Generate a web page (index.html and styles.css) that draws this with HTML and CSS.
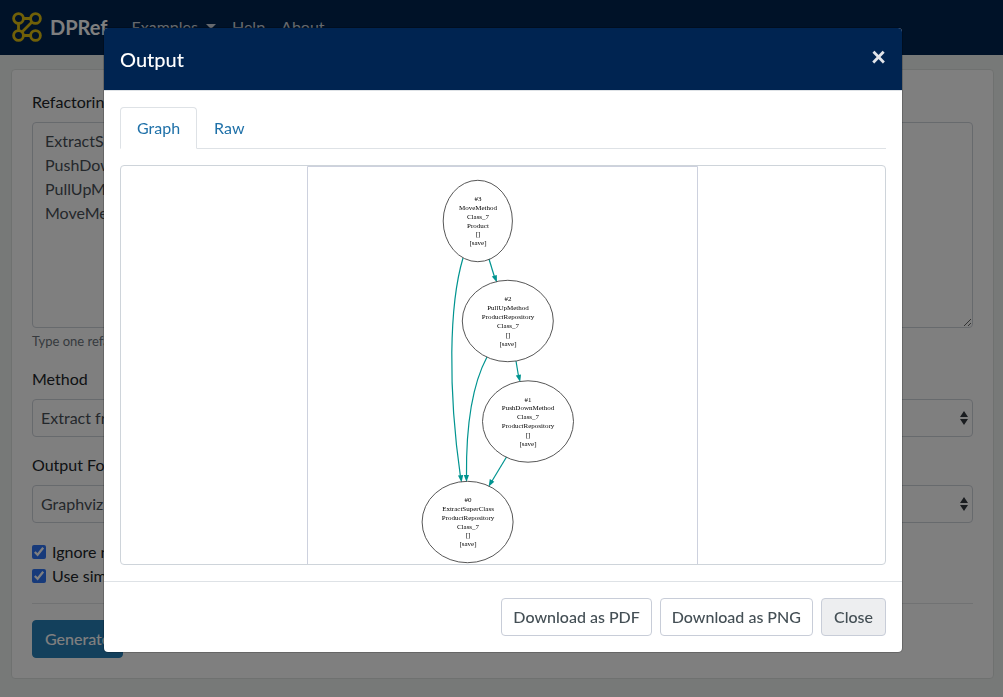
FILE: index.html
```html
<!DOCTYPE html>
<html lang="en">
<head>
<meta charset="utf-8">
<title>DPRef</title>
<link rel="stylesheet" href="styles.css">
</head>
<body>
<nav class="navbar">
  <a class="brand" href="#">
    <svg class="logo" viewBox="0 0 30 30" fill="none" stroke="#e0c010" stroke-width="2.8" aria-hidden="true">
      <circle cx="6.500" cy="6.500" r="4.900"/><circle cx="23.500" cy="6.500" r="4.900"/>
      <circle cx="6.500" cy="23.500" r="4.900"/><circle cx="23.500" cy="23.500" r="4.900"/>
      <path d="M11.500 6.500h7M6.500 11.500v7M11.500 23.500h7M10 20 20 10"/>
    </svg>
    DPRef
  </a>
  <a class="nav-item dropdown" href="#">Examples</a>
  <a class="nav-item" href="#">Help</a>
  <a class="nav-item" href="#">About</a>
</nav>

<main class="page">
  <form class="card">
    <div class="group">
      <label for="refactorings">Refactorings</label>
      <textarea class="control" id="refactorings" rows="8">ExtractSuperClass
PushDownMethod
PullUpMethod
MoveMethod</textarea>
      <small class="hint">Type one refactoring per line</small>
    </div>
    <div class="group">
      <label for="method">Method</label>
      <select class="control select" id="method"><option>Extract from</option></select>
    </div>
    <div class="group">
      <label for="format">Output Format</label>
      <select class="control select" id="format"><option>Graphviz</option></select>
    </div>
    <div class="checks">
      <div class="check"><input type="checkbox" id="ignore" checked><label for="ignore">Ignore names</label></div>
      <div class="check"><input type="checkbox" id="simple" checked><label for="simple">Use simple</label></div>
    </div>
    <hr>
    <button class="btn btn-primary" type="button">Generate</button>
  </form>
</main>

<div class="overlay">
  <section class="modal" role="dialog" aria-modal="true" aria-labelledby="modal-title">
    <header class="modal-header">
      <h5 id="modal-title">Output</h5>
      <button class="close" type="button" aria-label="Dismiss">×</button>
    </header>
    <div class="modal-body">
      <div class="tabs">
        <a class="tab active" href="#">Graph</a>
        <a class="tab" href="#">Raw</a>
      </div>
      <div class="graph-frame">
        <svg class="graph" viewBox="121 166 764 398" role="img" aria-label="Refactoring graph">
          <path class="sheet" d="M307.500 570V166.500H697.500V570"/>
          <g class="edge">
            <path d="M463 258C449 305 448 390 460.500 477"/>
            <path d="M489 259 494.500 277"/>
            <path d="M487 357C472 385 466 425 466.500 476"/>
            <path d="M516 361 518.500 376"/>
            <path d="M506.500 457 492 481"/>
          </g>
          <g class="arrow">
            <path d="M458 475.500 463.200 475 461.500 482.500Z"/>
            <path d="M491.800 276.500 496.800 275 497 282.500Z"/>
            <path d="M463.800 475 469 475 466.500 482Z"/>
            <path d="M515.800 375.500 521 374.600 520.200 382Z"/>
            <path d="M489.800 479 494.300 481.700 488.600 486.800Z"/>
          </g>
          <g class="node">
            <ellipse cx="477.800" cy="221" rx="34.600" ry="40.700"/>
            <ellipse cx="507.800" cy="321" rx="45.500" ry="40.700"/>
            <ellipse cx="528" cy="421.500" rx="45.500" ry="40.700"/>
            <ellipse cx="467.600" cy="522" rx="45.500" ry="40.700"/>
          </g>
          <g class="node-text">
            <text x="478" y="201">#3</text><text x="478" y="210">MoveMethod</text><text x="478" y="219">Class_7</text><text x="478" y="228">Product</text><text x="478" y="236">[]</text><text x="478" y="245">[save]</text>
            <text x="508" y="301">#2</text><text x="508" y="310">PullUpMethod</text><text x="508" y="319">ProductRepository</text><text x="508" y="328">Class_7</text><text x="508" y="337">[]</text><text x="508" y="346">[save]</text>
            <text x="528" y="402">#1</text><text x="528" y="410">PushDownMethod</text><text x="528" y="419">Class_7</text><text x="528" y="428">ProductRepository</text><text x="528" y="437">[]</text><text x="528" y="446">[save]</text>
            <text x="468" y="502">#0</text><text x="468" y="511">ExtractSuperClass</text><text x="468" y="520">ProductRepository</text><text x="468" y="529">Class_7</text><text x="468" y="537">[]</text><text x="468" y="546">[save]</text>
          </g>
        </svg>
      </div>
    </div>
    <footer class="modal-footer">
      <button class="btn btn-outline btn-download" type="button">Download as PDF</button>
      <button class="btn btn-outline btn-download" type="button">Download as PNG</button>
      <button class="btn btn-outline btn-muted" type="button">Close</button>
    </footer>
  </section>
</div>
</body>
</html>
```

FILE: styles.css
```css
* { box-sizing: border-box; }
body {
  margin: 0;
  min-height: 100vh;
  background: #eff3f1;
  color: #212529;
  font: 16px/24px Lato, sans-serif;
}
a { text-decoration: none; }

.navbar {
  display: flex;
  align-items: center;
  min-height: 55px;
  padding: 0 12px 2px;
  background: #002451;
}
.brand {
  display: flex;
  align-items: center;
  gap: 8px;
  margin-right: 16px;
  color: #fff;
  font-size: 20px;
  font-weight: 700;
}
.logo { width: 30px; height: 30px; }
.nav-item { padding: 0 8px; color: #cdd3dc; }
.dropdown::after {
  content: "";
  display: inline-block;
  margin-left: 8px;
  vertical-align: 4px;
  border: 5px solid transparent;
  border-top-color: currentColor;
  border-bottom: 0;
}

.page { padding: 14px 9px 18px 11px; }
.card {
  padding: 20px;
  border: 1px solid #dfe3e1;
  border-radius: 4px;
  background: #fff;
}
.group { margin-bottom: 16px; }
.group label { display: block; margin-bottom: 8px; }
.control {
  display: block;
  width: 100%;
  padding: 6px 12px;
  border: 1px solid #ced4da;
  border-radius: 4px;
  background: #fff;
  color: #495057;
  font: inherit;
}
.select {
  height: 38px;
  padding: 6px 8px;
  appearance: none;
  background: #fff url("data:image/svg+xml,%3Csvg xmlns='http://www.w3.org/2000/svg' viewBox='0 0 8 14'%3E%3Cpath fill='%23343a40' d='M4 0L0 6h8zM4 14L0 8h8z'/%3E%3C/svg%3E") no-repeat right 4px center / 8px 14px;
}
.hint {
  display: block;
  margin-top: 4px;
  color: #6c757d;
  font-size: 13px;
  line-height: 19px;
}
.checks { padding-top: 1px; }
.check { display: flex; align-items: center; gap: 6px; }
.check input { width: 14px; height: 14px; margin: 0; accent-color: #2f74f5; }
hr { margin: 15px 0 16px; border: 0; border-top: 1px solid #e3e5e7; }

.btn {
  padding: 6px 12px;
  border: 1px solid transparent;
  border-radius: 4px;
  font: inherit;
}
.btn-primary { background: #2780b9; border-color: #2780b9; color: #fff; font-weight: 500; }
.btn-outline { background: #fff; border-color: #c8cdd8; color: #444f55; font-weight: 500; }
.btn-download { padding: 6px 11px; }
.btn-muted { background: #edeef0; }

.overlay {
  position: fixed;
  inset: 0;
  padding: 27px 0 27px 3px;
  overflow: hidden;
  background: rgba(0, 0, 0, .5);
}
.modal {
  max-width: 800px;
  margin: 0 auto;
  border: 1px solid rgba(0, 0, 0, .2);
  border-radius: 5px;
  background: #fff;
  background-clip: padding-box;
}
.modal-header {
  display: flex;
  justify-content: space-between;
  align-items: flex-start;
  padding: 16px;
  border-bottom: 1px solid #dee2e6;
  border-radius: 4px 4px 0 0;
  background: #002451;
  background-clip: padding-box;
}
.modal-header h5 {
  margin: 0;
  color: #fff;
  font-size: 20px;
  font-weight: 500;
  line-height: 30px;
}
.close {
  padding: 0;
  border: 0;
  background: none;
  color: #e2e5ea;
  font: 900 26px/24px Lato, sans-serif;
}
.modal-body { padding: 16px; }
.tabs {
  display: flex;
  margin-bottom: 16px;
  border-bottom: 1px solid #dee2e6;
}
.tab {
  margin-bottom: -1px;
  padding: 8px 16px;
  border: 1px solid transparent;
  border-radius: 4px 4px 0 0;
  color: #1e70a8;
}
.tab.active { border-color: #dee2e6 #dee2e6 #fff; }
.graph-frame {
  height: 400px;
  overflow: hidden;
  border: 1px solid #ced4da;
  border-radius: 4px;
}
.graph { display: block; width: 100%; height: 100%; }
.sheet { fill: none; stroke: #cdd1de; }
.edge { fill: none; stroke: #009490; stroke-width: 1.2; }
.arrow { fill: #009490; }
.node { fill: none; stroke: #444; stroke-width: 0.9; }
.node-text {
  fill: #000;
  font: 7px "Liberation Serif", serif;
  text-anchor: middle;
}
.modal-footer {
  display: flex;
  flex-wrap: wrap;
  justify-content: flex-end;
  gap: 8px;
  padding: 16px;
  border-top: 1px solid #dee2e6;
}
```
